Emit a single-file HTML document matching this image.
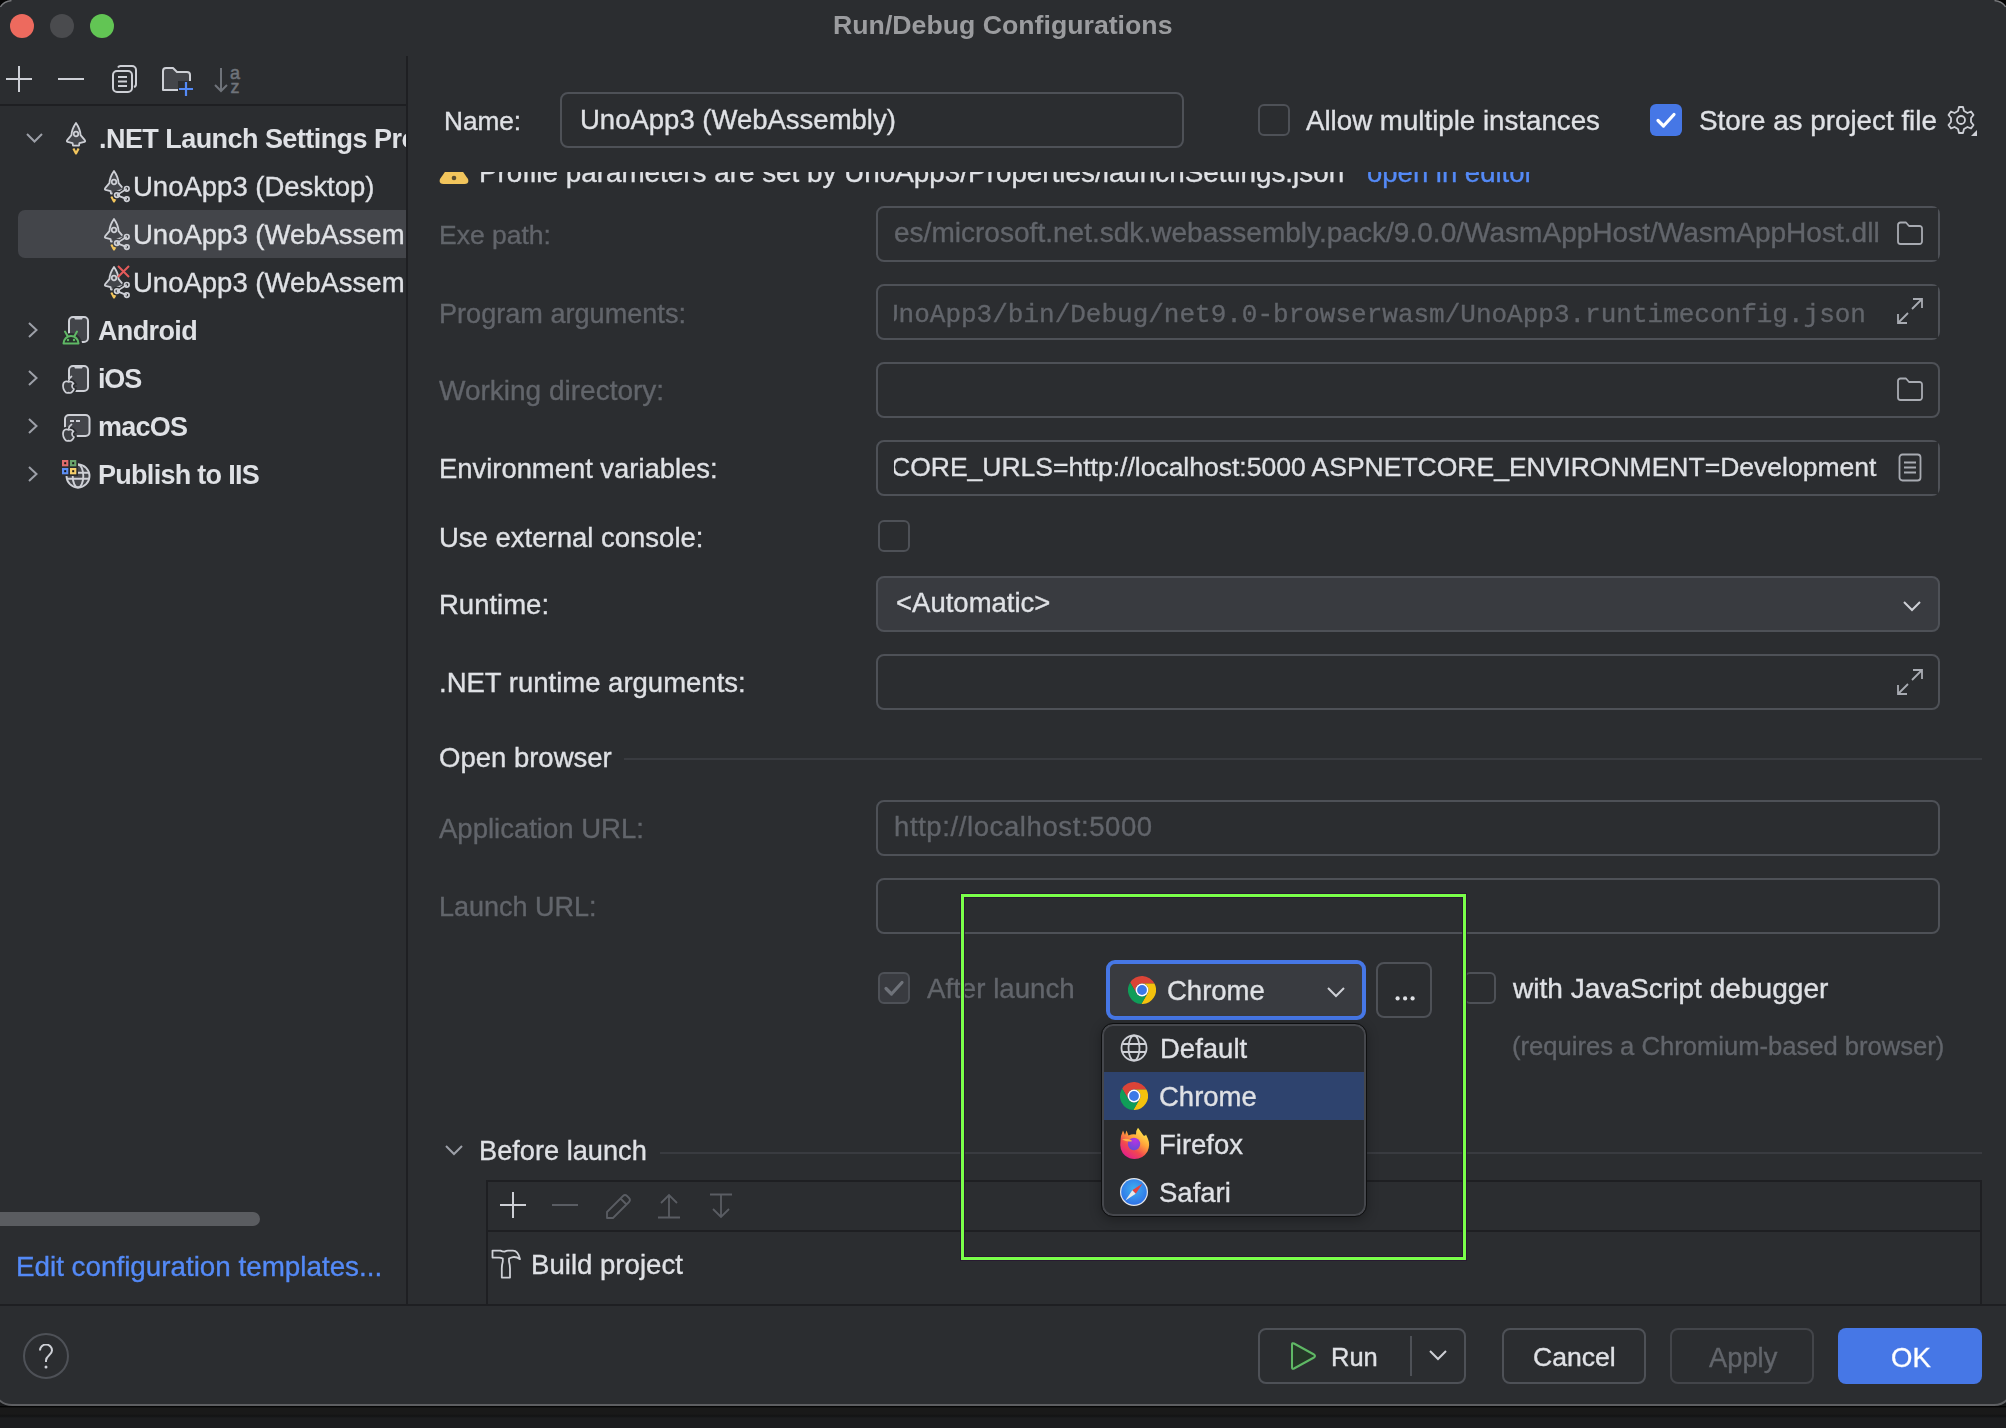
<!DOCTYPE html>
<html><head><meta charset="utf-8"><style>
html,body{margin:0;padding:0;width:2006px;height:1428px;overflow:hidden;background:#161718;}
#frame{position:absolute;left:-8px;top:-8px;width:2022px;height:1414px;background:#2b2d30;border-radius:20px;border:2px solid #5e5f62;box-sizing:border-box;}
#win{position:absolute;left:0;top:0;width:2006px;height:1406px;}
.a{position:absolute;}
.t{position:absolute;white-space:nowrap;line-height:1;-webkit-text-stroke:0.35px currentColor;will-change:transform;}
</style></head><body>
<div class="a" style="left:0;top:1406px;width:2006px;height:22px;background:linear-gradient(#000 0,#0a0a0a 1px,#191919 2px,#191919 8px,#121314 10px,#1c1d1f 12px,#1c1d1f 22px)"></div>
<div id="frame"></div>
<div id="win">
<svg class="a" style="left:0px;top:0px;" width="14" height="9" viewBox="0 0 14 9"><path d="M0 0H11Q3 1 0 6.5Z" fill="#050505"/><path d="M11.5 0.6Q3.5 1.4 0.4 7" fill="none" stroke="#78797c" stroke-width="1.4"/></svg>
<svg class="a" style="left:1992px;top:0px;" width="14" height="9" viewBox="0 0 14 9"><path d="M14 0H3Q11 1 14 6.5Z" fill="#050505"/><path d="M2.5 0.6Q10.5 1.4 13.6 7" fill="none" stroke="#78797c" stroke-width="1.4"/></svg>
<div class="t" style="left:833px;top:12.3px;font-size:26.7px;color:#9b9c9f;font-weight:bold;font-family:'Liberation Sans';-webkit-text-stroke:0;">Run/Debug Configurations</div>
<div class="a" style="left:10px;top:14px;width:24px;height:24px;background:#ed6a5e;border-radius:50%"></div>
<div class="a" style="left:50px;top:14px;width:24px;height:24px;background:#4a4b4e;border-radius:50%"></div>
<div class="a" style="left:90px;top:14px;width:24px;height:24px;background:#62c554;border-radius:50%"></div>
<div class="a" style="left:406px;top:56px;width:2px;height:1248px;background:#1e1f22"></div>
<div class="a" style="left:0px;top:104px;width:406px;height:2px;background:#1e1f22"></div>
<svg class="a" style="left:6px;top:66px;" width="26" height="26" viewBox="0 0 26 26"><path d="M13 0V26M0 13H26" stroke="#ced0d6" stroke-width="2"/></svg>
<svg class="a" style="left:58px;top:66px;" width="26" height="26" viewBox="0 0 26 26"><path d="M0 13H26" stroke="#ced0d6" stroke-width="2"/></svg>
<svg class="a" style="left:110px;top:64px;" width="28" height="30" viewBox="0 0 28 30"><rect x="3" y="7" width="19" height="21" rx="4" fill="none" stroke="#ced0d6" stroke-width="2"/><path d="M8 3.5A3 3 0 0 1 11 2H22A4 4 0 0 1 26 6V20A3 3 0 0 1 24 23" fill="none" stroke="#ced0d6" stroke-width="2"/><path d="M8 13H17M8 17.5H17M8 22H17" stroke="#ced0d6" stroke-width="2"/></svg>
<svg class="a" style="left:160px;top:66px;" width="36" height="32" viewBox="0 0 36 32"><path d="M3 5A3 3 0 0 1 6 2H13L17 6H27A3 3 0 0 1 30 9V18H24V24H3Z" fill="#43454a" stroke="#ced0d6" stroke-width="2" stroke-linejoin="round"/><rect x="18" y="15" width="18" height="17" fill="#2b2d30"/><path d="M26 16V30M19 23H33" stroke="#548af7" stroke-width="2.2"/></svg>
<svg class="a" style="left:214px;top:66px;" width="30" height="28" viewBox="0 0 30 28"><path d="M7 2V25M1 19L7 25L13 19" fill="none" stroke="#6f737a" stroke-width="2"/><text x="16" y="13" font-family="Liberation Sans" font-size="18" fill="#6f737a" stroke="#6f737a" stroke-width="0.5">a</text><text x="16.5" y="26.5" font-family="Liberation Sans" font-size="18" fill="#6f737a" stroke="#6f737a" stroke-width="0.5">z</text></svg>
<div class="a" style="left:0px;top:106px;width:406px;height:1198px;overflow:hidden">
<div class="a" style="left:18px;top:104px;width:420px;height:48px;background:#43454a;border-radius:7px"></div>
<svg class="a" style="left:26px;top:27px;" width="17" height="10" viewBox="0 0 17 10"><path d="M1 1L8.5 8.5L16 1" fill="none" stroke="#9da0a8" stroke-width="2"/></svg>
<svg class="a" style="left:28px;top:216px;" width="10" height="16" viewBox="0 0 10 16"><path d="M1 1L8.5 8L1 15" fill="none" stroke="#9da0a8" stroke-width="2"/></svg>
<svg class="a" style="left:28px;top:264px;" width="10" height="16" viewBox="0 0 10 16"><path d="M1 1L8.5 8L1 15" fill="none" stroke="#9da0a8" stroke-width="2"/></svg>
<svg class="a" style="left:28px;top:312px;" width="10" height="16" viewBox="0 0 10 16"><path d="M1 1L8.5 8L1 15" fill="none" stroke="#9da0a8" stroke-width="2"/></svg>
<svg class="a" style="left:28px;top:360px;" width="10" height="16" viewBox="0 0 10 16"><path d="M1 1L8.5 8L1 15" fill="none" stroke="#9da0a8" stroke-width="2"/></svg>
<svg class="a" style="left:66px;top:16px;" width="22" height="33" viewBox="0 0 22 33"><path d="M10 1C7.2 5 5.6 9 5.4 13.2L1.2 18.2Q0.3 19.4 1.6 19.9L6.6 21.2L7 23.6H13L13.4 21.2L18.4 19.9Q19.7 19.4 18.8 18.2L14.6 13.2C14.4 9 12.8 5 10 1Z" fill="#43454a" stroke="#ced0d6" stroke-width="1.8" stroke-linejoin="round"/><circle cx="10" cy="12" r="2.3" fill="none" stroke="#ced0d6" stroke-width="1.7"/><path d="M7.4 26.4L10 31.4L12.6 26.4" fill="none" stroke="#f2c55c" stroke-width="2.2" stroke-linejoin="round"/></svg>
<svg class="a" style="left:102px;top:63px;" width="30" height="34" viewBox="0 0 30 34"><defs><mask id="m102169"><rect width="30" height="34" fill="#fff"/><circle cx="24.8" cy="19.8" r="4.6" fill="#000"/><circle cx="24.8" cy="30.1" r="4.6" fill="#000"/><circle cx="14.9" cy="26.1" r="4.6" fill="#000"/><path d="M14.9 26.1L24.8 19.8L24.8 30.1Z" fill="#000" stroke="#000" stroke-width="4" stroke-linejoin="round"/></mask></defs><g mask="url(#m102169)"><g transform="translate(2,1)"><path d="M10 1C7.2 5 5.6 9 5.4 13.2L1.2 18.2Q0.3 19.4 1.6 19.9L6.6 21.2L7 23.6H13L13.4 21.2L18.4 19.9Q19.7 19.4 18.8 18.2L14.6 13.2C14.4 9 12.8 5 10 1Z" fill="#43454a" stroke="#ced0d6" stroke-width="1.8" stroke-linejoin="round"/><circle cx="10" cy="12" r="2.3" fill="none" stroke="#ced0d6" stroke-width="1.7"/><path d="M7.4 26.4L10 31.4L12.6 26.4" fill="none" stroke="#f2c55c" stroke-width="2.2" stroke-linejoin="round"/></g></g><path d="M14.9 26.1L24.8 19.8M14.9 26.1L24.8 30.1" stroke="#ced0d6" stroke-width="1.7"/><circle cx="24.8" cy="19.8" r="2.3" fill="none" stroke="#ced0d6" stroke-width="1.7"/><circle cx="24.8" cy="30.1" r="2.3" fill="none" stroke="#ced0d6" stroke-width="1.7"/><circle cx="14.9" cy="26.1" r="2.3" fill="none" stroke="#ced0d6" stroke-width="1.7"/></svg>
<svg class="a" style="left:102px;top:111px;" width="30" height="34" viewBox="0 0 30 34"><defs><mask id="m102217"><rect width="30" height="34" fill="#fff"/><circle cx="24.8" cy="19.8" r="4.6" fill="#000"/><circle cx="24.8" cy="30.1" r="4.6" fill="#000"/><circle cx="14.9" cy="26.1" r="4.6" fill="#000"/><path d="M14.9 26.1L24.8 19.8L24.8 30.1Z" fill="#000" stroke="#000" stroke-width="4" stroke-linejoin="round"/></mask></defs><g mask="url(#m102217)"><g transform="translate(2,1)"><path d="M10 1C7.2 5 5.6 9 5.4 13.2L1.2 18.2Q0.3 19.4 1.6 19.9L6.6 21.2L7 23.6H13L13.4 21.2L18.4 19.9Q19.7 19.4 18.8 18.2L14.6 13.2C14.4 9 12.8 5 10 1Z" fill="#43454a" stroke="#ced0d6" stroke-width="1.8" stroke-linejoin="round"/><circle cx="10" cy="12" r="2.3" fill="none" stroke="#ced0d6" stroke-width="1.7"/><path d="M7.4 26.4L10 31.4L12.6 26.4" fill="none" stroke="#f2c55c" stroke-width="2.2" stroke-linejoin="round"/></g></g><path d="M14.9 26.1L24.8 19.8M14.9 26.1L24.8 30.1" stroke="#ced0d6" stroke-width="1.7"/><circle cx="24.8" cy="19.8" r="2.3" fill="none" stroke="#ced0d6" stroke-width="1.7"/><circle cx="24.8" cy="30.1" r="2.3" fill="none" stroke="#ced0d6" stroke-width="1.7"/><circle cx="14.9" cy="26.1" r="2.3" fill="none" stroke="#ced0d6" stroke-width="1.7"/></svg>
<svg class="a" style="left:102px;top:159px;" width="30" height="34" viewBox="0 0 30 34"><defs><mask id="m102265"><rect width="30" height="34" fill="#fff"/><circle cx="24.8" cy="19.8" r="4.6" fill="#000"/><circle cx="24.8" cy="30.1" r="4.6" fill="#000"/><circle cx="14.9" cy="26.1" r="4.6" fill="#000"/><path d="M14.9 26.1L24.8 19.8L24.8 30.1Z" fill="#000" stroke="#000" stroke-width="4" stroke-linejoin="round"/></mask></defs><g mask="url(#m102265)"><g transform="translate(2,1)"><path d="M10 1C7.2 5 5.6 9 5.4 13.2L1.2 18.2Q0.3 19.4 1.6 19.9L6.6 21.2L7 23.6H13L13.4 21.2L18.4 19.9Q19.7 19.4 18.8 18.2L14.6 13.2C14.4 9 12.8 5 10 1Z" fill="#43454a" stroke="#ced0d6" stroke-width="1.8" stroke-linejoin="round"/><circle cx="10" cy="12" r="2.3" fill="none" stroke="#ced0d6" stroke-width="1.7"/><path d="M7.4 26.4L10 31.4L12.6 26.4" fill="none" stroke="#f2c55c" stroke-width="2.2" stroke-linejoin="round"/></g></g><path d="M14.9 26.1L24.8 19.8M14.9 26.1L24.8 30.1" stroke="#ced0d6" stroke-width="1.7"/><circle cx="24.8" cy="19.8" r="2.3" fill="none" stroke="#ced0d6" stroke-width="1.7"/><circle cx="24.8" cy="30.1" r="2.3" fill="none" stroke="#ced0d6" stroke-width="1.7"/><circle cx="14.9" cy="26.1" r="2.3" fill="none" stroke="#ced0d6" stroke-width="1.7"/><path d="M16 1L27 12M27 1L16 12" stroke="#e55b5b" stroke-width="2"/></svg>
<div class="t" style="left:99px;top:20.1px;font-size:27px;color:#dfe1e5;font-weight:bold;font-family:'Liberation Sans';letter-spacing:-0.55px;-webkit-text-stroke:0;">.NET Launch Settings Profile</div>
<div class="t" style="left:133px;top:67.2px;font-size:27.5px;color:#dfe1e5;font-weight:normal;font-family:'Liberation Sans';">UnoApp3 (Desktop)</div>
<div class="t" style="left:133px;top:115.2px;font-size:27.5px;color:#dfe1e5;font-weight:normal;font-family:'Liberation Sans';">UnoApp3 (WebAssembly)</div>
<div class="t" style="left:133px;top:163.2px;font-size:27.5px;color:#dfe1e5;font-weight:normal;font-family:'Liberation Sans';">UnoApp3 (WebAssembly)</div>
<svg class="a" style="left:62px;top:210px;" width="30" height="30" viewBox="0 0 30 30"><defs><mask id="d62316"><rect width="30" height="30" fill="#fff"/><path d="M1 28A8 8 0 0 1 17 28Z" fill="#000" stroke="#000" stroke-width="6" stroke-linejoin="round"/></mask></defs><g mask="url(#d62316)"><rect x="7" y="1" width="19" height="25" rx="4" fill="#43454a" stroke="#ced0d6" stroke-width="2"/><path d="M12 1.5H21L20 3.5H13Z" fill="#ced0d6"/></g><path d="M1.5 27.5A7.5 7.5 0 0 1 16.5 27.5Z" fill="#26302a" stroke="#5fb865" stroke-width="2" stroke-linejoin="round"/><path d="M3 15.5L5.5 20M15 15.5L12.5 20" stroke="#5fb865" stroke-width="2" stroke-linecap="round"/><circle cx="6" cy="24" r="1.2" fill="#5fb865"/><circle cx="12" cy="24" r="1.2" fill="#5fb865"/></svg>
<svg class="a" style="left:62px;top:259px;" width="30" height="30" viewBox="0 0 30 30"><defs><mask id="d62365"><rect width="30" height="30" fill="#fff"/><g transform="translate(0,11)"><path d="M6.5 6C5.5 5 1 4.5 1 10C1 13.5 3.5 17 5 17C6 17 6 16.5 6.5 16.5C7 16.5 7 17 8 17C9.5 17 11.5 14.5 12 13C10.5 12.5 10 11 10 10C10 9 10.5 8 11.5 7.5C10.5 6 9 5.5 8 5.5C7.5 5.5 7 6 6.5 6Z" fill="#000" stroke="#000" stroke-width="5"/></g></mask></defs><g mask="url(#d62365)"><rect x="7" y="1" width="19" height="25" rx="4" fill="#43454a" stroke="#ced0d6" stroke-width="2"/><path d="M12 1.5H21L20 3.5H13Z" fill="#ced0d6"/></g><g transform="translate(0,11)"><path d="M6.5 6C5.5 5 1 4.5 1 10C1 13.5 3.5 17 5 17C6 17 6 16.5 6.5 16.5C7 16.5 7 17 8 17C9.5 17 11.5 14.5 12 13C10.5 12.5 10 11 10 10C10 9 10.5 8 11.5 7.5C10.5 6 9 5.5 8 5.5C7.5 5.5 7 6 6.5 6Z" fill="#3c3e42" stroke="#ced0d6" stroke-width="1.7" stroke-linejoin="round"/><path d="M6.8 4.5Q7 2 9.5 0.5" fill="none" stroke="#ced0d6" stroke-width="1.7" stroke-linecap="round"/></g></svg>
<svg class="a" style="left:62px;top:308px;" width="30" height="30" viewBox="0 0 30 30"><defs><mask id="d62414"><rect width="30" height="30" fill="#fff"/><g transform="translate(0,10)"><path d="M6.5 6C5.5 5 1 4.5 1 10C1 13.5 3.5 17 5 17C6 17 6 16.5 6.5 16.5C7 16.5 7 17 8 17C9.5 17 11.5 14.5 12 13C10.5 12.5 10 11 10 10C10 9 10.5 8 11.5 7.5C10.5 6 9 5.5 8 5.5C7.5 5.5 7 6 6.5 6Z" fill="#000" stroke="#000" stroke-width="5"/></g></mask></defs><g mask="url(#d62414)"><rect x="3" y="1" width="24.5" height="21" rx="4" fill="#43454a" stroke="#ced0d6" stroke-width="2"/><path d="M8 7H12M14 7H18" stroke="#ced0d6" stroke-width="2"/></g><g transform="translate(0,10)"><path d="M6.5 6C5.5 5 1 4.5 1 10C1 13.5 3.5 17 5 17C6 17 6 16.5 6.5 16.5C7 16.5 7 17 8 17C9.5 17 11.5 14.5 12 13C10.5 12.5 10 11 10 10C10 9 10.5 8 11.5 7.5C10.5 6 9 5.5 8 5.5C7.5 5.5 7 6 6.5 6Z" fill="#3c3e42" stroke="#ced0d6" stroke-width="1.7" stroke-linejoin="round"/><path d="M6.8 4.5Q7 2 9.5 0.5" fill="none" stroke="#ced0d6" stroke-width="1.7" stroke-linecap="round"/></g></svg>
<svg class="a" style="left:62px;top:353px;" width="30" height="30" viewBox="0 0 30 30"><defs><mask id="pub"><rect width="30" height="30" fill="#fff"/><rect x="-1" y="-1" width="17" height="18" fill="#000"/></mask></defs><g mask="url(#pub)"><circle cx="16" cy="17" r="11.5" fill="#43454a" stroke="#ced0d6" stroke-width="1.9"/><ellipse cx="16" cy="17" rx="5.3" ry="11.5" fill="none" stroke="#ced0d6" stroke-width="1.9"/><path d="M4.5 13.7H27.5M4.5 19.7H27.5" stroke="#ced0d6" stroke-width="1.9"/></g><rect x="0" y="1" width="6.3" height="6.3" fill="#e06c6c"/><rect x="8" y="1" width="6.3" height="6.3" fill="#6aa56c"/><rect x="0" y="9" width="6.3" height="6.3" fill="#5d8ff5"/><rect x="8" y="9" width="6.3" height="6.3" fill="#f5cf6b"/><rect x="2.2" y="3.2" width="2" height="2" fill="#151515"/><rect x="10.2" y="3.2" width="2" height="2" fill="#151515"/><rect x="2.2" y="11.2" width="2" height="2" fill="#151515"/><rect x="10.2" y="11.2" width="2" height="2" fill="#151515"/></svg>
<div class="t" style="left:98px;top:211.6px;font-size:27px;color:#dfe1e5;font-weight:bold;font-family:'Liberation Sans';letter-spacing:-0.640px;-webkit-text-stroke:0;">Android</div>
<div class="t" style="left:98px;top:259.6px;font-size:27px;color:#dfe1e5;font-weight:bold;font-family:'Liberation Sans';letter-spacing:-1.171px;-webkit-text-stroke:0;">iOS</div>
<div class="t" style="left:98px;top:307.6px;font-size:27px;color:#dfe1e5;font-weight:bold;font-family:'Liberation Sans';letter-spacing:-0.730px;-webkit-text-stroke:0;">macOS</div>
<div class="t" style="left:98px;top:355.6px;font-size:27px;color:#dfe1e5;font-weight:bold;font-family:'Liberation Sans';letter-spacing:-0.715px;-webkit-text-stroke:0;">Publish to IIS</div>
<div class="a" style="left:-10px;top:1106px;width:270px;height:14px;background:#5a5c60;border-radius:7px"></div>
</div>
<div class="t" style="left:16px;top:1252.9px;font-size:27.8px;color:#548af7;font-weight:normal;font-family:'Liberation Sans';">Edit configuration templates...</div>
<div class="a" style="left:0px;top:1304px;width:2006px;height:2px;background:#1e1f22"></div>
<div class="a" style="left:23px;top:1333px;width:46px;height:46px;border:2px solid #4e5157;border-radius:50%;box-sizing:border-box"></div>
<svg class="a" style="left:36px;top:1344px;" width="20" height="26" viewBox="0 0 20 26"><path d="M4 6.5A6 6 0 0 1 16 6.5C16 11 10 11.5 10 16.5V18" fill="none" stroke="#ced0d6" stroke-width="2"/><circle cx="10" cy="23" r="1.5" fill="#ced0d6"/></svg>
<div class="a" style="left:1258px;top:1328px;width:208px;height:56px;border:2px solid #4e5157;border-radius:8px;box-sizing:border-box;background:transparent"></div>
<svg class="a" style="left:1289px;top:1341px;" width="30" height="30" viewBox="0 0 30 30"><path d="M3 3.5Q3 1.5 5 2.5L25 13.5Q27 15 25 16.5L5 27.5Q3 28.5 3 26.5Z" fill="#253627" stroke="#5fb865" stroke-width="2" stroke-linejoin="round"/></svg>
<div class="t" style="left:1331px;top:1345.2px;font-size:25.5px;color:#dfe1e5;font-weight:normal;font-family:'Liberation Sans';">Run</div>
<div class="a" style="left:1410px;top:1336px;width:2px;height:40px;background:#4e5157"></div>
<svg class="a" style="left:1429px;top:1350px;" width="18" height="11" viewBox="0 0 18 11"><path d="M1 1L9 9L17 1" fill="none" stroke="#ced0d6" stroke-width="2"/></svg>
<div class="a" style="left:1502px;top:1328px;width:144px;height:56px;border:2px solid #4e5157;border-radius:8px;box-sizing:border-box;background:transparent"></div>
<div class="t" style="left:1533px;top:1344.3px;font-size:26.6px;color:#dfe1e5;font-weight:normal;font-family:'Liberation Sans';">Cancel</div>
<div class="a" style="left:1670px;top:1328px;width:144px;height:56px;border:2px solid #43454a;border-radius:8px;box-sizing:border-box;background:transparent"></div>
<div class="t" style="left:1709px;top:1343.7px;font-size:27.3px;color:#62656b;font-weight:normal;font-family:'Liberation Sans';">Apply</div>
<div class="a" style="left:1838px;top:1328px;width:144px;height:56px;background:#4677e6;border-radius:8px"></div>
<div class="t" style="left:1891px;top:1343.6px;font-size:27.5px;color:#ffffff;font-weight:normal;font-family:'Liberation Sans';">OK</div>
<div class="t" style="left:443.5px;top:108.3px;font-size:26.2px;color:#dfe1e5;font-weight:normal;font-family:'Liberation Sans';">Name:</div>
<div class="a" style="left:560px;top:92px;width:624px;height:56px;border:2px solid #4e5157;border-radius:8px;box-sizing:border-box"></div>
<div class="t" style="left:580px;top:105.7px;font-size:27.5px;color:#dfe1e5;font-weight:normal;font-family:'Liberation Sans';">UnoApp3 (WebAssembly)</div>
<div class="a" style="left:1258px;top:104px;width:32px;height:32px;border:2px solid #4e5157;border-radius:6px;box-sizing:border-box"></div>
<div class="t" style="left:1306px;top:107.0px;font-size:27.7px;color:#dfe1e5;font-weight:normal;font-family:'Liberation Sans';">Allow multiple instances</div>
<div class="a" style="left:1650px;top:104px;width:32px;height:32px;background:#4677e6;border-radius:6px"></div>
<svg class="a" style="left:1650px;top:104px;" width="32" height="32" viewBox="0 0 32 32"><path d="M8 16.5L13.5 22L24 10.5" fill="none" stroke="#fff" stroke-width="3.2" stroke-linecap="round" stroke-linejoin="round"/></svg>
<div class="t" style="left:1699px;top:106.9px;font-size:27.8px;color:#dfe1e5;font-weight:normal;font-family:'Liberation Sans';">Store as project file</div>
<svg class="a" style="left:1946px;top:105px;" width="32" height="32" viewBox="0 0 32 32"><path d="M13 2H17L18 6L21.5 8L25 6.5L27.5 10L25 13V17L27.5 20L25 23.5L21.5 22L18 24L17 28H13L12 24L8.5 22L5 23.5L2.5 20L5 17V13L2.5 10L5 6.5L8.5 8L12 6Z" fill="none" stroke="#ced0d6" stroke-width="1.8" stroke-linejoin="round"/><circle cx="15" cy="15" r="4" fill="none" stroke="#ced0d6" stroke-width="1.8"/><path d="M31 25V31H25Z" fill="#ced0d6"/></svg>
<div class="a" style="left:408px;top:172px;width:1598px;height:1132px;overflow:hidden">
<svg class="a" style="left:30px;top:-4px;" width="32" height="18" viewBox="0 0 32 18"><path d="M9 1H23L30 11Q31.5 16 26.5 16H5.5Q0.5 16 2 11Z" fill="#f2c55c"/><circle cx="16" cy="10" r="2.3" fill="#5a4d2e"/></svg>
<div class="t" style="left:71px;top:-13.5px;font-size:27.85px;color:#dfe1e5;font-weight:normal;font-family:'Liberation Sans';">Profile parameters are set by UnoApp3/Properties/launchSettings.json</div>
<div class="t" style="left:959px;top:-13.2px;font-size:27.5px;color:#548af7;font-weight:normal;font-family:'Liberation Sans';">open in editor</div>
<div class="t" style="left:31px;top:50.0px;font-size:26.5px;color:#62656b;font-weight:normal;font-family:'Liberation Sans';">Exe path:</div>
<div class="a" style="left:468px;top:34px;width:1064px;height:56px;border:2px solid #4e5157;border-radius:8px;box-sizing:border-box;background:transparent"></div>
<div class="t" style="left:486px;top:47.1px;font-size:28.05px;color:#62656b;font-weight:normal;font-family:'Liberation Sans';">es/microsoft.net.sdk.webassembly.pack/9.0.0/WasmAppHost/WasmAppHost.dll</div>
<div class="a" style="left:1476px;top:36px;width:54px;height:52px;background:#2b2d30"></div>
<svg class="a" style="left:1488px;top:49px;" width="28" height="25" viewBox="0 0 28 25"><path d="M2 4A2.5 2.5 0 0 1 4.5 1.5H10L13 5H23.5A2.5 2.5 0 0 1 26 7.5V20.5A2.5 2.5 0 0 1 23.5 23H4.5A2.5 2.5 0 0 1 2 20.5Z" fill="none" stroke="#a8abb2" stroke-width="1.8" stroke-linejoin="round"/></svg>
<div class="t" style="left:31px;top:127.5px;font-size:27.1px;color:#62656b;font-weight:normal;font-family:'Liberation Sans';">Program arguments:</div>
<div class="a" style="left:468px;top:112px;width:1064px;height:56px;border:2px solid #4e5157;border-radius:8px;box-sizing:border-box;background:transparent"></div>
<div class="a" style="left:486px;top:114px;width:990px;height:52px;overflow:hidden">
<div class="t" style="left:-11px;top:16.0px;font-size:26px;color:#62656b;font-weight:normal;font-family:'Liberation Mono';">UnoApp3/bin/Debug/net9.0-browserwasm/UnoApp3.runtimeconfig.json</div>
</div>
<div class="a" style="left:1470px;top:114px;width:60px;height:52px;background:#2b2d30"></div>
<svg class="a" style="left:1488px;top:125px;" width="28" height="28" viewBox="0 0 28 28"><path d="M17 2H26V11M26 2L16 12M11 26H2V17M2 26L12 16" fill="none" stroke="#a8abb2" stroke-width="1.8"/></svg>
<div class="t" style="left:31px;top:204.8px;font-size:28px;color:#62656b;font-weight:normal;font-family:'Liberation Sans';">Working directory:</div>
<div class="a" style="left:468px;top:190px;width:1064px;height:56px;border:2px solid #4e5157;border-radius:8px;box-sizing:border-box;background:transparent"></div>
<svg class="a" style="left:1488px;top:205px;" width="28" height="25" viewBox="0 0 28 25"><path d="M2 4A2.5 2.5 0 0 1 4.5 1.5H10L13 5H23.5A2.5 2.5 0 0 1 26 7.5V20.5A2.5 2.5 0 0 1 23.5 23H4.5A2.5 2.5 0 0 1 2 20.5Z" fill="none" stroke="#a8abb2" stroke-width="1.8" stroke-linejoin="round"/></svg>
<div class="t" style="left:31px;top:283.3px;font-size:27.4px;color:#dfe1e5;font-weight:normal;font-family:'Liberation Sans';">Environment variables:</div>
<div class="a" style="left:468px;top:268px;width:1064px;height:56px;border:2px solid #4e5157;border-radius:8px;box-sizing:border-box;background:transparent"></div>
<div class="a" style="left:486px;top:270px;width:990px;height:52px;overflow:hidden">
<div class="t" style="left:-3px;top:12.3px;font-size:26.5px;color:#dfe1e5;font-weight:normal;font-family:'Liberation Sans';">CORE_URLS=http://localhost:5000 ASPNETCORE_ENVIRONMENT=Development</div>
</div>
<div class="a" style="left:1476px;top:270px;width:54px;height:52px;background:#2b2d30"></div>
<svg class="a" style="left:1490px;top:281px;" width="24" height="29" viewBox="0 0 24 29"><rect x="1.5" y="1.5" width="21" height="26" rx="3" fill="none" stroke="#a8abb2" stroke-width="1.8"/><path d="M6 9.5H18M6 14.5H18M6 19.5H18" stroke="#a8abb2" stroke-width="1.8"/></svg>
<div class="t" style="left:31px;top:351.6px;font-size:27.5px;color:#dfe1e5;font-weight:normal;font-family:'Liberation Sans';">Use external console:</div>
<div class="a" style="left:470px;top:348px;width:32px;height:32px;border:2px solid #4e5157;border-radius:6px;box-sizing:border-box"></div>
<div class="t" style="left:31px;top:419.2px;font-size:27.5px;color:#dfe1e5;font-weight:normal;font-family:'Liberation Sans';">Runtime:</div>
<div class="a" style="left:468px;top:404px;width:1064px;height:56px;border:2px solid #4e5157;border-radius:8px;box-sizing:border-box;background:#393b40"></div>
<div class="t" style="left:488px;top:417.2px;font-size:27.5px;color:#dfe1e5;font-weight:normal;font-family:'Liberation Sans';">&lt;Automatic&gt;</div>
<svg class="a" style="left:1495px;top:429px;" width="18" height="11" viewBox="0 0 18 11"><path d="M1 1L9 9L17 1" fill="none" stroke="#ced0d6" stroke-width="2"/></svg>
<div class="t" style="left:31px;top:496.7px;font-size:27.5px;color:#dfe1e5;font-weight:normal;font-family:'Liberation Sans';">.NET runtime arguments:</div>
<div class="a" style="left:468px;top:482px;width:1064px;height:56px;border:2px solid #4e5157;border-radius:8px;box-sizing:border-box;background:transparent"></div>
<svg class="a" style="left:1488px;top:496px;" width="28" height="28" viewBox="0 0 28 28"><path d="M17 2H26V11M26 2L16 12M11 26H2V17M2 26L12 16" fill="none" stroke="#a8abb2" stroke-width="1.8"/></svg>
<div class="t" style="left:31px;top:572.2px;font-size:27.5px;color:#dfe1e5;font-weight:normal;font-family:'Liberation Sans';">Open browser</div>
<div class="a" style="left:216px;top:586px;width:1358px;height:2px;background:#393b40"></div>
<div class="t" style="left:31px;top:642.8px;font-size:27.5px;color:#62656b;font-weight:normal;font-family:'Liberation Sans';">Application URL:</div>
<div class="a" style="left:468px;top:628px;width:1064px;height:56px;border:2px solid #4e5157;border-radius:8px;box-sizing:border-box;background:transparent"></div>
<div class="t" style="left:486px;top:641.2px;font-size:27.5px;color:#62656b;font-weight:normal;font-family:'Liberation Sans';letter-spacing:0.6px">http://localhost:5000</div>
<div class="t" style="left:31px;top:721.8px;font-size:27px;color:#62656b;font-weight:normal;font-family:'Liberation Sans';">Launch URL:</div>
<div class="a" style="left:468px;top:706px;width:1064px;height:56px;border:2px solid #4e5157;border-radius:8px;box-sizing:border-box;background:transparent"></div>
<div class="a" style="left:470px;top:800px;width:32px;height:32px;border:2px solid #4e5157;border-radius:6px;box-sizing:border-box;background:#393b40"></div>
<svg class="a" style="left:470px;top:800px;" width="32" height="32" viewBox="0 0 32 32"><path d="M8 16.5L13.5 22L24 10.5" fill="none" stroke="#6f737a" stroke-width="3.2" stroke-linecap="round" stroke-linejoin="round"/></svg>
<div class="t" style="left:519px;top:803.3px;font-size:27.7px;color:#62656b;font-weight:normal;font-family:'Liberation Sans';">After launch</div>
<div class="a" style="left:698px;top:788px;width:260px;height:60px;border:4px solid #4677e6;border-radius:9px;box-sizing:border-box;background:#393b40"></div>
<div class="t" style="left:759px;top:805.2px;font-size:27.5px;color:#dfe1e5;font-weight:normal;font-family:'Liberation Sans';">Chrome</div>
<svg class="a" style="left:919px;top:815px;" width="18" height="11" viewBox="0 0 18 11"><path d="M1 1L9 9L17 1" fill="none" stroke="#ced0d6" stroke-width="2"/></svg>
<div class="a" style="left:968px;top:790px;width:56px;height:56px;border:2px solid #4e5157;border-radius:8px;box-sizing:border-box;background:transparent"></div>
<svg class="a" style="left:982px;top:818px;" width="30" height="16" viewBox="0 0 30 16"><circle cx="7.599999999999909" cy="8.4" r="2.1" fill="#dfe1e5"/><circle cx="15.099999999999909" cy="8.4" r="2.1" fill="#dfe1e5"/><circle cx="22.59999999999991" cy="8.4" r="2.1" fill="#dfe1e5"/></svg>
<div class="a" style="left:1056px;top:800px;width:32px;height:32px;border:2px solid #4e5157;border-radius:6px;box-sizing:border-box"></div>
<div class="t" style="left:1105px;top:803.0px;font-size:28.1px;color:#dfe1e5;font-weight:normal;font-family:'Liberation Sans';">with JavaScript debugger</div>
<div class="t" style="left:1104px;top:861.8px;font-size:25.6px;color:#62656b;font-weight:normal;font-family:'Liberation Sans';">(requires a Chromium-based browser)</div>
<svg class="a" style="left:37px;top:973px;" width="18" height="11" viewBox="0 0 18 11"><path d="M1 1L9 9L17 1" fill="none" stroke="#9da0a8" stroke-width="2"/></svg>
<div class="t" style="left:71px;top:964.9px;font-size:27.2px;color:#dfe1e5;font-weight:normal;font-family:'Liberation Sans';">Before launch</div>
<div class="a" style="left:252px;top:980px;width:1322px;height:2px;background:#393b40"></div>
<div class="a" style="left:78px;top:1008px;width:1496px;height:126px;border:2px solid #1e1f22;border-bottom:none;box-sizing:border-box"></div>
<div class="a" style="left:80px;top:1058px;width:1492px;height:2px;background:#1e1f22"></div>
<svg class="a" style="left:92px;top:1020px;" width="26" height="26" viewBox="0 0 26 26"><path d="M13 0V26M0 13H26" stroke="#ced0d6" stroke-width="2"/></svg>
<svg class="a" style="left:144px;top:1020px;" width="26" height="26" viewBox="0 0 26 26"><path d="M0 13H26" stroke="#5a5d63" stroke-width="2"/></svg>
<svg class="a" style="left:196px;top:1020px;" width="28" height="28" viewBox="0 0 28 28"><path d="M3 25L3 20L19 4Q21 2 23 4L25 6Q27 8 25 10L9 26H3Z M16.5 6.5L22.5 12.5" fill="none" stroke="#5a5d63" stroke-width="1.8" stroke-linejoin="round"/></svg>
<svg class="a" style="left:248px;top:1020px;" width="26" height="28" viewBox="0 0 26 28"><path d="M13 25V3M5 11L13 3L21 11M2 25.5H24" fill="none" stroke="#5a5d63" stroke-width="1.8"/></svg>
<svg class="a" style="left:300px;top:1020px;" width="26" height="28" viewBox="0 0 26 28"><path d="M13 3V25M5 17L13 25L21 17M2 2.5H24" fill="none" stroke="#5a5d63" stroke-width="1.8"/></svg>
<svg class="a" style="left:82px;top:1076px;" width="32" height="32" viewBox="0 0 32 32"><path d="M2.5 2.6H10.5Q12.2 3.6 14.5 3.6Q16.5 2.6 18 2.6H23Q28 2.6 30 11.2Q26.5 8.6 23 9.1Q20.6 9.5 19 10.6V13.5Q20 17 20 20.5V29.6H11.8V20.5Q11.8 17 12.8 13.5V10.6Q11 9.4 8.5 9.6H2.5Z" fill="none" stroke="#ced0d6" stroke-width="1.8" stroke-linejoin="round"/></svg>
<div class="t" style="left:123px;top:1079.4px;font-size:27.6px;color:#dfe1e5;font-weight:normal;font-family:'Liberation Sans';">Build project</div>
</div>
<div class="a" style="left:1101px;top:1023px;width:266px;height:194px;background:#2b2d30;border:1px solid #0e0f10;border-radius:12px;box-sizing:border-box;box-shadow:inset 0 0 0 2px #45474c, 0 3px 12px rgba(0,0,0,0.3)"></div>
<div class="a" style="left:1104px;top:1072px;width:260px;height:48px;background:#2e436e"></div>
<svg class="a" style="left:1128px;top:976px;" width="28" height="28" viewBox="0 0 28 28"><path d="M14.00,7.56L26.43,7.56A14.0,14.0 0 0 0 2.21,6.45L8.42,17.22A6.44,6.44 0 0 1 14.00,7.56Z" fill="#db4437"/><path d="M19.58,17.22L13.36,27.99A14.0,14.0 0 0 0 26.43,7.56L14.00,7.56A6.44,6.44 0 0 1 19.58,17.22Z" fill="#f4c20d"/><path d="M8.42,17.22L2.21,6.45A14.0,14.0 0 0 0 13.36,27.99L19.58,17.22A6.44,6.44 0 0 1 8.42,17.22Z" fill="#0f9d58"/><circle cx="14.0" cy="14.0" r="6.44" fill="#fff"/><circle cx="14.0" cy="14.0" r="4.90" fill="#3b78e7"/></svg>
<svg class="a" style="left:1120px;top:1034px;" width="28" height="28" viewBox="0 0 28 28"><circle cx="14" cy="14" r="12.5" fill="none" stroke="#ced0d6" stroke-width="1.8"/><ellipse cx="14" cy="14" rx="5.5" ry="12.5" fill="none" stroke="#ced0d6" stroke-width="1.8"/><path d="M2.5 10H25.5M2.5 18H25.5" stroke="#ced0d6" stroke-width="1.8"/></svg>
<div class="t" style="left:1159.5px;top:1035.2px;font-size:27.5px;color:#dfe1e5;font-weight:normal;font-family:'Liberation Sans';">Default</div>
<svg class="a" style="left:1120px;top:1082px;" width="28" height="28" viewBox="0 0 28 28"><path d="M14.00,7.56L26.43,7.56A14.0,14.0 0 0 0 2.21,6.45L8.42,17.22A6.44,6.44 0 0 1 14.00,7.56Z" fill="#db4437"/><path d="M19.58,17.22L13.36,27.99A14.0,14.0 0 0 0 26.43,7.56L14.00,7.56A6.44,6.44 0 0 1 19.58,17.22Z" fill="#f4c20d"/><path d="M8.42,17.22L2.21,6.45A14.0,14.0 0 0 0 13.36,27.99L19.58,17.22A6.44,6.44 0 0 1 8.42,17.22Z" fill="#0f9d58"/><circle cx="14.0" cy="14.0" r="6.44" fill="#fff"/><circle cx="14.0" cy="14.0" r="4.90" fill="#3b78e7"/></svg>
<div class="t" style="left:1159px;top:1083.2px;font-size:27.5px;color:#dfe1e5;font-weight:normal;font-family:'Liberation Sans';">Chrome</div>
<svg class="a" style="left:1118px;top:1127px;" width="33" height="33" viewBox="0 0 33 33"><defs><linearGradient id="ff" x1="0.85" y1="0.05" x2="0.25" y2="0.95"><stop offset="0" stop-color="#fff44f"/><stop offset="0.4" stop-color="#ffa33a"/><stop offset="0.7" stop-color="#f2484f"/><stop offset="1" stop-color="#e3208a"/></linearGradient><radialGradient id="fp" cx="0.6" cy="0.2" r="0.9"><stop offset="0" stop-color="#b833e1"/><stop offset="1" stop-color="#5a4ed6"/></radialGradient></defs><path d="M2.5 14Q1 23 7 28.5Q11.5 32 16.5 32Q25 32 29.5 24.5Q32.5 18 30 12L28 7.5Q27 9.5 25.5 8.5L20 0.8Q17.5 4 18 7.5Q14.5 6.5 10.5 8.5L8.5 3.5L7 8L5 3.5Q2.5 8.5 2.5 14Z" fill="url(#ff)"/><circle cx="16" cy="17" r="6.2" fill="url(#fp)"/><path d="M4 12.5Q9.5 10.5 14.5 14Q10 15.5 4 12.5Z" fill="#ffb347"/></svg>
<div class="t" style="left:1159px;top:1131.2px;font-size:27.5px;color:#dfe1e5;font-weight:normal;font-family:'Liberation Sans';">Firefox</div>
<svg class="a" style="left:1120px;top:1178px;" width="28" height="28" viewBox="0 0 28 28"><defs><radialGradient id="sf" cx="0.5" cy="0.4" r="0.6"><stop offset="0" stop-color="#3fb0ee"/><stop offset="1" stop-color="#2f72e8"/></radialGradient></defs><circle cx="14" cy="14" r="14" fill="#e4e6ea"/><circle cx="14" cy="14" r="12.8" fill="url(#sf)"/><path d="M22.6 5.4L12.3 12.3L15.7 15.7Z" fill="#e8423b"/><path d="M5.4 22.6L12.3 12.3L15.7 15.7Z" fill="#e9e9e9"/></svg>
<div class="t" style="left:1159px;top:1179.2px;font-size:27.5px;color:#dfe1e5;font-weight:normal;font-family:'Liberation Sans';">Safari</div>
<div class="a" style="left:961px;top:894px;width:505px;height:366px;border:3px solid #7aff4a;box-sizing:border-box;box-shadow:0 0 0 1px rgba(40,20,50,.8), inset 0 0 0 1px rgba(40,20,50,.8)"></div>
</div>
</body></html>
